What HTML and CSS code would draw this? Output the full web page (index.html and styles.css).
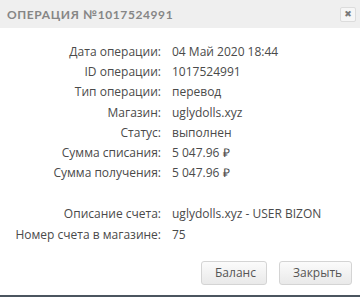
FILE: index.html
```html
<!DOCTYPE html>
<html lang="ru">
<head>
	<meta charset="UTF-8">
	<title>Операция</title>
	<link rel="stylesheet" href="styles.css">
</head>
<body>
	<div class="modal">
		<div class="modal-header">
			<span class="modal-title">Операция №1017524991</span>
			<button class="close" type="button">&#10006;</button>
		</div>

		<div class="modal-body">
			<div class="info">
				<div class="label">Дата операции:</div><div class="value">04 Май 2020 18:44</div>
				<div class="label">ID операции:</div><div class="value">1017524991</div>
				<div class="label">Тип операции:</div><div class="value">перевод</div>
				<div class="label">Магазин:</div><div class="value">uglydolls.xyz</div>
				<div class="label">Статус:</div><div class="value">выполнен</div>
				<div class="label">Сумма списания:</div><div class="value">5 047.96 ₽</div>
				<div class="label">Сумма получения:</div><div class="value">5 047.96 ₽</div>
				<div class="spacer"></div>
				<div class="label">Описание счета:</div><div class="value">uglydolls.xyz - USER BIZON</div>
				<div class="label">Номер счета в магазине:</div><div class="value">75</div>
			</div>
		</div>

		<div class="modal-footer">
			<button class="btn" type="button">Баланс</button>
			<button class="btn" type="button">Закрыть</button>
		</div>
	</div>
	<div class="bottom-bar"></div>
</body>
</html>
```

FILE: styles.css
```css
html,
body {
	margin: 0;
	padding: 0;
	background: white;
	font-family: 'Open Sans', sans-serif;
}

.modal {
	width: 360px;
	height: 295px;
	display: flex;
	flex-direction: column;
	background: white;
}

.modal-header {
	height: 28px;
	background: #efefef;
	display: flex;
	align-items: center;
	justify-content: space-between;
	padding: 0 4px 0 7px;
}

.modal-title {
	color: #868686;
	font-family: 'Lato', sans-serif;
	font-weight: 700;
	font-size: 12px;
	letter-spacing: 0.6px;
	text-transform: uppercase;
	margin-top: 1px;
}

.close {
	width: 16px;
	height: 15px;
	padding: 0;
	border: 1px solid #dcdcdc;
	border-radius: 2px;
	background: #f6f6f6;
	color: #7a7a7a;
	font-family: 'DejaVu Sans', sans-serif;
	font-size: 9px;
	line-height: 13px;
	text-align: center;
	margin-top: 1px;
}

.modal-body {
	padding: 14px 0 0 8px;
}

.info {
	display: grid;
	grid-template-columns: 153px 1fr;
	column-gap: 11px;
	font-size: 12px;
	line-height: 20.2px;
	color: #4a4a4a;
}

.label {
	text-align: right;
}

.spacer {
	grid-column: 1 / 3;
	height: 21px;
}

.modal-footer {
	display: flex;
	justify-content: flex-end;
	gap: 12px;
	padding: 16px 8px 0 0;
}

.btn {
	height: 24px;
	padding: 0 13px;
	border: 1px solid #d4d4d4;
	border-radius: 3px;
	background: linear-gradient(#fbfbfb, #e9e9e9);
	color: #555;
	font-family: 'Open Sans', sans-serif;
	font-size: 12px;
}

.btn:first-child {
	width: 66px;
}

.btn:last-child {
	width: 73px;
}

.bottom-bar {
	height: 2px;
	background: #4b555f;
}
```
